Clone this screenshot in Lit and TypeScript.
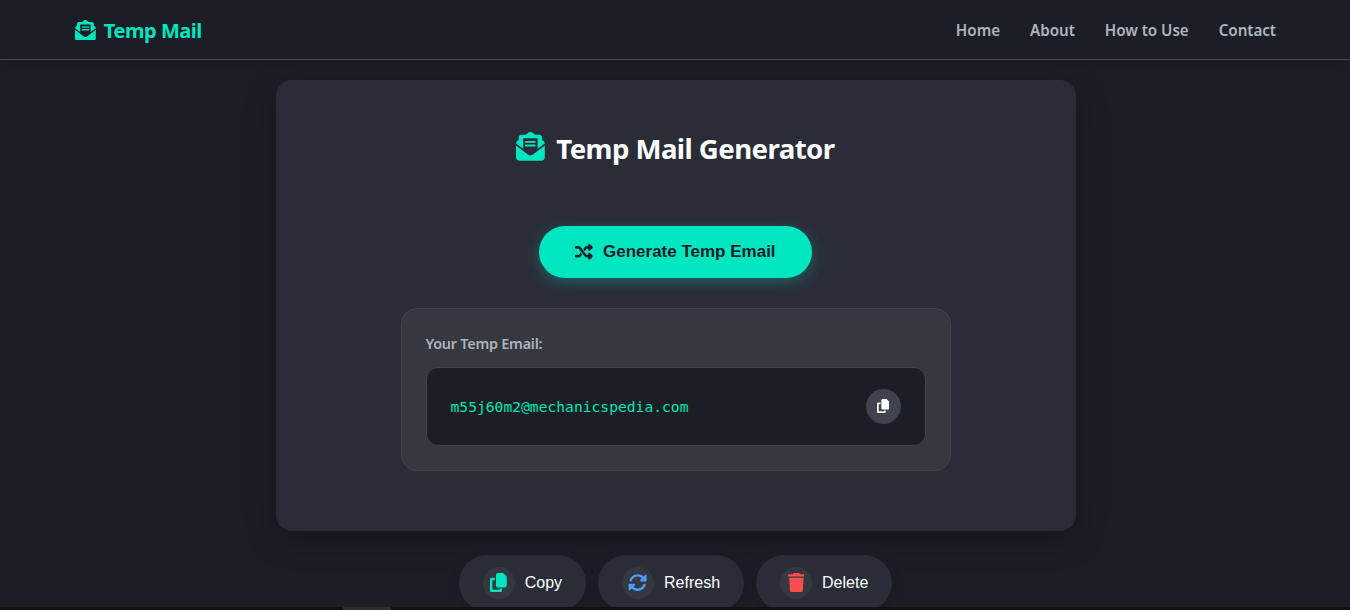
import { LitElement, html, css, svg } from "lit";
import { customElement } from "lit/decorators.js";

const icons: Record<string, { w: number; d: string }> = {
  mail: {
    w: 512,
    d: "M256 0c12.2 0 23.8 3.9 33.5 11L339.4 48H416c26.5 0 48 21.5 48 48v44.3l22.1 16.4c14.8 10.9 24.1 27.7 25.7 45.8L384 296V112H128V296L.2 202.5c1.6-18.1 10.9-34.9 25.7-45.8L48 140.3V96c0-26.5 21.5-48 48-48h76.6l49.9-36.9C232.2 3.9 243.9 0 256 0zM0 448V242.1L217.6 403.3c11.1 8.2 24.6 12.7 38.4 12.7s27.3-4.4 38.4-12.7L512 242.1V448c0 35.3-28.7 64-64 64H64c-35.3 0-64-28.7-64-64zM176 160H336c8.8 0 16 7.2 16 16s-7.2 16-16 16H176c-8.8 0-16-7.2-16-16s7.2-16 16-16zm0 64H336c8.8 0 16 7.2 16 16s-7.2 16-16 16H176c-8.8 0-16-7.2-16-16s7.2-16 16-16z",
  },
  shuffle: {
    w: 512,
    d: "M403.8 34.4c12-5 25.7-2.2 34.9 6.9l64 64c6 6 9.4 14.1 9.4 22.6s-3.4 16.6-9.4 22.6l-64 64c-9.2 9.2-22.9 11.9-34.9 6.9s-19.8-16.6-19.8-29.6V160H352c-10.1 0-19.6 4.7-25.6 12.8L284 229.3 244 176l31.2-41.6C293.3 110.2 321.8 96 352 96h32V64c0-12.9 7.8-24.6 19.8-29.6zM164 282.7L204 336l-31.2 41.6C154.7 401.8 126.2 416 96 416H32c-17.7 0-32-14.3-32-32s14.3-32 32-32H96c10.1 0 19.6-4.7 25.6-12.8L164 282.7zm274.6 188c-9.2 9.2-22.9 11.9-34.9 6.9s-19.8-16.6-19.8-29.6V416H352c-30.2 0-58.7-14.2-76.8-38.4L121.6 172.8c-6-8.1-15.5-12.8-25.6-12.8H32c-17.7 0-32-14.3-32-32s14.3-32 32-32H96c30.2 0 58.7 14.2 76.8 38.4L326.4 339.2c6 8.1 15.5 12.8 25.6 12.8h32V320c0-12.9 7.8-24.6 19.8-29.6s25.7-2.2 34.9 6.9l64 64c6 6 9.4 14.1 9.4 22.6s-3.4 16.6-9.4 22.6l-64 64z",
  },
  copy: {
    w: 448,
    d: "M208 0H332.1c12.7 0 24.9 5.1 33.9 14.1l67.9 67.9c9 9 14.1 21.2 14.1 33.9V336c0 26.5-21.5 48-48 48H208c-26.5 0-48-21.5-48-48V48c0-26.5 21.5-48 48-48zM48 128h80v64H64V448H256V416h64v48c0 26.5-21.5 48-48 48H48c-26.5 0-48-21.5-48-48V176c0-26.5 21.5-48 48-48z",
  },
  rotate: {
    w: 512,
    d: "M142.9 142.9c62.2-62.2 162.7-62.5 225.3-1L327 183c-6.9 6.9-8.9 17.2-5.2 26.2s12.5 14.8 22.2 14.8H463.5c0 0 0 0 0 0H472c13.3 0 24-10.7 24-24V72c0-9.7-5.8-18.5-14.8-22.2s-19.3-1.7-26.2 5.2L413.4 96.6c-87.6-86.5-228.7-86.2-315.8 1C73.2 122 55.6 150.7 44.8 181.4c-5.9 16.7 2.9 34.9 19.5 40.8s34.9-2.9 40.8-19.5c7.7-21.8 20.2-42.3 37.8-59.8zM16 312v7.6 .7V440c0 9.7 5.8 18.5 14.8 22.2s19.3 1.7 26.2-5.2l41.6-41.6c87.6 86.5 228.7 86.2 315.8-1c24.4-24.4 42.1-53.1 52.9-83.7c5.9-16.7-2.9-34.9-19.5-40.8s-34.9 2.9-40.8 19.5c-7.7 21.8-20.2 42.3-37.8 59.8c-62.2 62.2-162.7 62.5-225.3 1L185 329c6.9-6.9 8.9-17.2 5.2-26.2s-12.5-14.8-22.2-14.8H48.4h-.7H40c-13.3 0-24 10.7-24 24z",
  },
  trash: {
    w: 448,
    d: "M135.2 17.7L128 32H32C14.3 32 0 46.3 0 64S14.3 96 32 96H416c17.7 0 32-14.3 32-32s-14.3-32-32-32H320l-7.2-14.3C307.4 6.8 296.3 0 284.2 0H163.8c-12.1 0-23.2 6.8-28.6 17.7zM416 128H32L53.2 467c1.6 25.3 22.6 45 47.9 45H346.9c25.3 0 46.3-19.7 47.9-45L416 128z",
  },
};

const icon = (name: string) => html`<svg
  class="icon ${name}"
  viewBox="0 0 ${icons[name].w} 512"
  aria-hidden="true"
>${svg`<path d=${icons[name].d}></path>`}</svg>`;

@customElement("app-root")
export class AppRoot extends LitElement {
  static styles = css`
    :host {
      display: flex;
      flex-direction: column;
      height: 610px;
      overflow: hidden;
      background: #1c1e26;
      color: #fff;
      font-family: "Noto Sans", "Open Sans", sans-serif;
    }
    * { box-sizing: border-box; }
    button { border: 0; padding: 0; margin: 0; color: inherit; font-family: "Liberation Sans", Arial, sans-serif; }
    a { color: inherit; text-decoration: none; white-space: nowrap; }
    .icon { display: block; height: 1em; fill: currentColor; flex: none; }
    .icon.shuffle { stroke: currentColor; stroke-width: 8; overflow: visible; }

    .nav {
      flex: none;
      height: 60px;
      border-bottom: 1px solid #444751;
      box-shadow: 0 2px 10px rgba(0, 0, 0, 0.2);
      padding: 1px 74px 0 75px;
      display: flex;
      align-items: center;
      justify-content: space-between;
    }
    .brand { display: flex; align-items: center; gap: 8px; padding-top: 2px; color: #00e6c0; font: 700 20px/28px "Noto Sans", sans-serif; letter-spacing: -0.46px; }
    .brand .icon { height: 20.8px; margin-top: -2px; }
    .links { display: flex; gap: 30px; font: 600 15.2px/24px "Noto Sans", sans-serif; letter-spacing: -0.04px; color: #b0b3c1; }

    .main { flex: 1; min-height: 0; overflow: hidden; padding: 20px 0 0 1px; display: flex; flex-direction: column; align-items: center; }
    .card {
      flex: none;
      width: 800px;
      height: 451px;
      border-radius: 16px;
      background: #2a2c38;
      box-shadow: 0 8px 32px rgba(0, 0, 0, 0.3);
      display: flex;
      flex-direction: column;
      align-items: center;
    }
    .title { margin: 48px 0 0; height: 40px; display: flex; align-items: center; gap: 11px; font: 700 27.6px/40px "Noto Sans", sans-serif; letter-spacing: -0.56px; white-space: nowrap; }
    .title .icon { height: 28.8px; color: #00e6c0; margin-top: -3px; }
    .generate {
      margin-top: 58px;
      width: 273px;
      height: 52px;
      border-radius: 26px;
      background: #00e6c0;
      color: #1c1e26;
      box-shadow: 0 4px 15px rgba(0, 230, 192, 0.3);
      display: flex;
      align-items: center;
      justify-content: center;
      gap: 10px;
      font-size: 17px;
      font-weight: 700;
      white-space: nowrap;
    }
    .generate .icon { height: 17.6px; margin-top: -1px; }
    .panel {
      margin-top: 30px;
      width: 550px;
      height: 163px;
      padding: 25px 24px 24px;
      border: 1px solid #42444f;
      border-radius: 16px;
      background: #363840;
    }
    .label { font: 600 14.4px/20px "Noto Sans", sans-serif; letter-spacing: -0.24px; color: #b0b3c1; white-space: nowrap; }
    .address {
      margin-top: 13px;
      height: 79px;
      padding: 0 24px 0 24px;
      border: 1px solid #42444f;
      border-radius: 12px;
      background: #1c1e26;
      display: flex;
      align-items: center;
      justify-content: space-between;
    }
    .email { font-family: "DejaVu Sans Mono", monospace; font-size: 14.65px; color: #00e6b4; white-space: nowrap; }
    .mini { width: 35px; height: 35px; border-radius: 50%; background: #40434e; display: grid; place-items: center; font-size: 14px; }
    .mini .icon { margin-top: -1px; }

    .actions { flex: none; margin-top: 24px; display: flex; gap: 12px; }
    .action {
      height: 56px;
      border-radius: 28px;
      background: #2a2c38;
      box-shadow: 0 4px 12px rgba(0, 0, 0, 0.2);
      padding: 0 24px;
      display: flex;
      align-items: center;
      gap: 10px;
      font-size: 16px;
      white-space: nowrap;
    }
    .disc { width: 32px; height: 32px; border-radius: 50%; background: #363840; display: grid; place-items: center; font-size: 19.2px; }
    .disc .icon { margin-top: -1px; }
    .green { color: #00e6c0; }
    .blue { color: #4a9eff; }
    .red { color: #ff4d4d; }

    .track { flex: none; height: 3px; background: #101010; padding-left: 343px; }
    .thumb { width: 48px; height: 3px; background: #2e2e2e; }
  `;

  private links = ["Home", "About", "How to Use", "Contact"];
  private actions = [
    { label: "Copy", icon: "copy", tone: "green" },
    { label: "Refresh", icon: "rotate", tone: "blue" },
    { label: "Delete", icon: "trash", tone: "red" },
  ];

  render() {
    return html`
      <header class="nav">
        <a class="brand" href="#">${icon("mail")}<span>Temp Mail</span></a>
        <nav class="links">${this.links.map((l) => html`<a href="#">${l}</a>`)}</nav>
      </header>
      <main class="main">
        <section class="card">
          <h1 class="title">${icon("mail")}<span>Temp Mail Generator</span></h1>
          <button class="generate">${icon("shuffle")}<span>Generate Temp Email</span></button>
          <div class="panel">
            <div class="label">Your Temp Email:</div>
            <div class="address">
              <span class="email">m55j60m2@mechanicspedia.com</span>
              <button class="mini" aria-label="Copy">${icon("copy")}</button>
            </div>
          </div>
        </section>
        <div class="actions">
          ${this.actions.map(
            (a) => html`<button class="action">
              <span class="disc ${a.tone}">${icon(a.icon)}</span><span>${a.label}</span>
            </button>`
          )}
        </div>
      </main>
      <div class="track"><div class="thumb"></div></div>
    `;
  }
}
